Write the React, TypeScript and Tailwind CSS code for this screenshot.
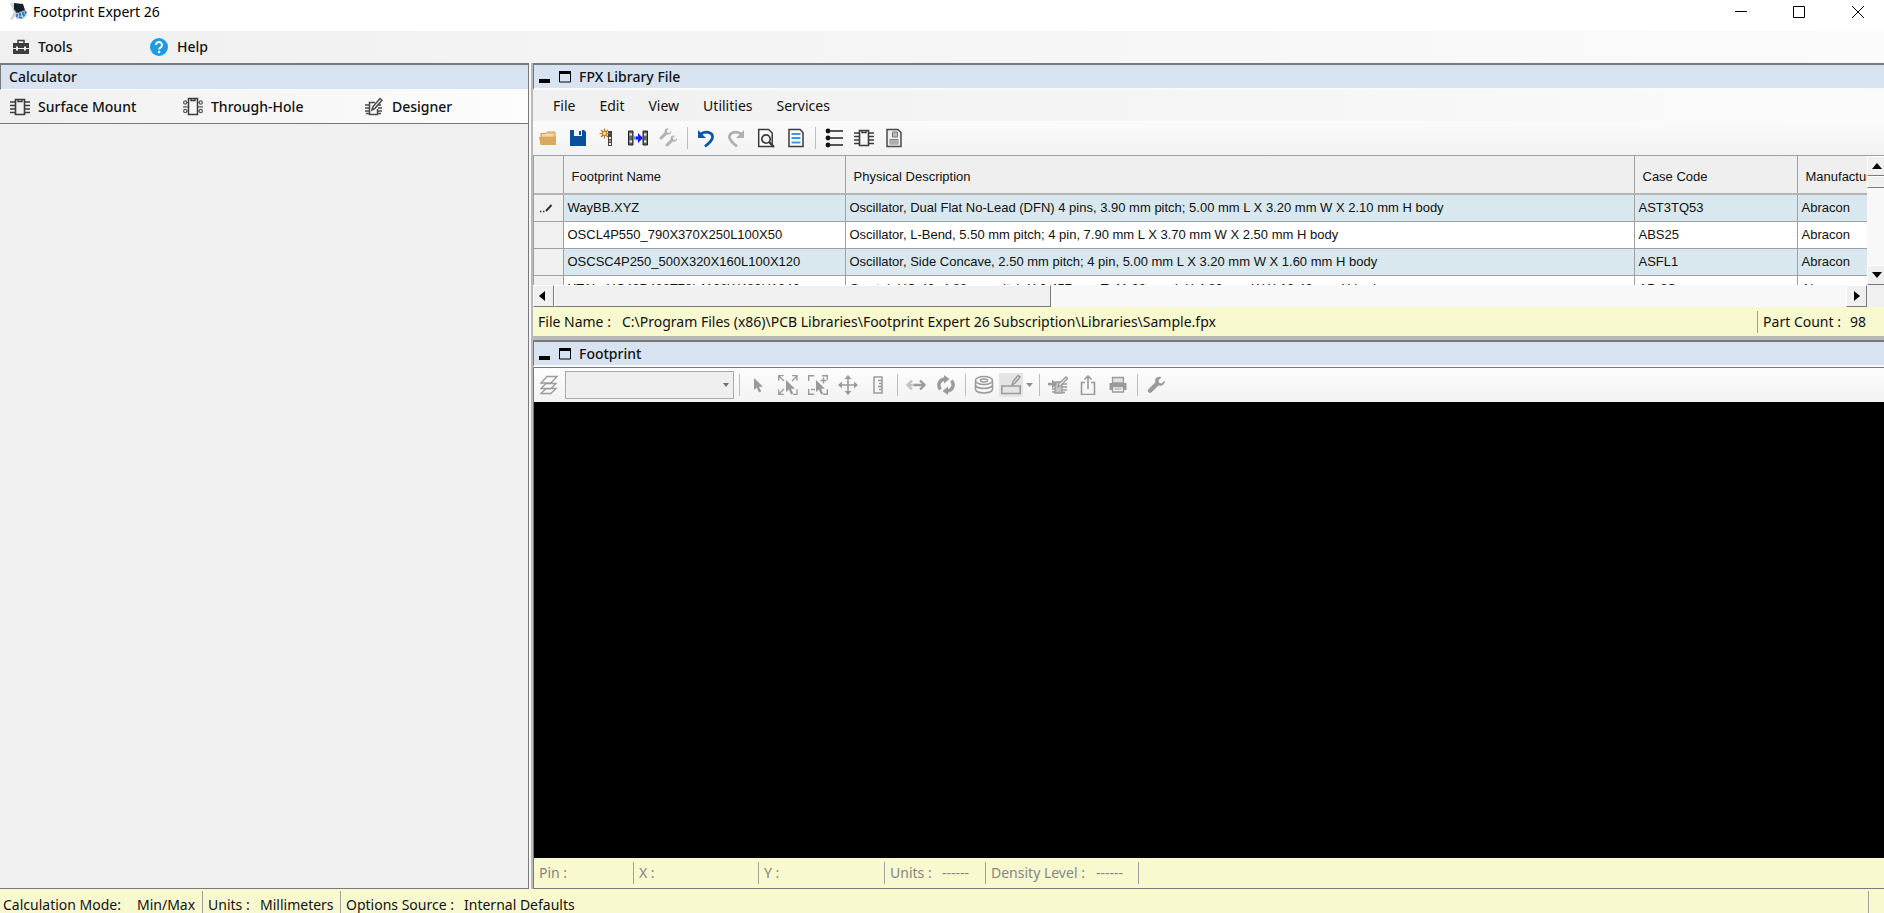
import React from "react";

type P = { children?: React.ReactNode };

const S = ({ w = 20, h = 20, children }: P & { w?: number; h?: number }) => (
  <svg width={w} height={h} viewBox={`0 0 ${w} ${h}`} fill="none" aria-hidden="true" className="shrink-0">
    {children}
  </svg>
);

const Logo = () => (
  <S w={20} h={20}>
    <path d="M1 1 L6 2 L8 11 L4 17 L1 18 L5 10 Z" fill="#cfd2d4" />
    <path d="M5 1 L14 2 L16 8 L8 11 L5 7 Z" fill="#16202a" />
    <path d="M7 11 L17 8 L18 13 L14 17 L8 17 L6 14 Z" fill="#b5cfe8" />
    <path d="M8 12v3M11 11v3M14 10v3M16.500 9v3M10 15l3 1M14 14l2-1" stroke="#2f74b8" strokeWidth="1.700" />
    <path d="M5 7l3 4 8-3" stroke="#4a5560" />
  </S>
);

const Toolbox = () => (
  <S w={18} h={16}>
    <path d="M6 4V1.500h6V4" stroke="#3d3d3d" strokeWidth="1.500" />
    <path d="M1 4h16v5h-3V7.500h-2V9H6V7.500H4V9H1zM1 10h3v1.500h2V10h6v1.500h2V10h3v5H1z" fill="#3d3d3d" />
  </S>
);

const HelpIcon = () => (
  <S w={18} h={18}>
    <circle cx="9" cy="9" r="9" fill="#1b9ce3" />
    <path d="M6 7a3 3 0 1 1 4.600 2.500C9.500 10.200 9.100 10.600 9.100 11.600" stroke="#fff" strokeWidth="2" />
    <circle cx="9.100" cy="14" r="1.300" fill="#fff" />
  </S>
);

const Chip = () => (
  <S>
    <path d="M5.500 2.500h9v15h-9z" stroke="#3b3b3b" strokeWidth="1.600" />
    <path d="M8 2.500v2h4v-2" stroke="#3b3b3b" strokeWidth="1.400" />
    <path d="M0 5h5M0 8.500h5M0 12h5M0 15.500h5M15 5h5M15 8.500h5M15 12h5M15 15.500h5" stroke="#3b3b3b" strokeWidth="1.600" />
  </S>
);

const ThroughChip = () => (
  <S>
    <path d="M5.500 1.500h9v16h-9z" stroke="#3b3b3b" strokeWidth="1.500" />
    <path d="M8 1.500v2h4v-2" stroke="#3b3b3b" strokeWidth="1.400" />
    <g stroke="#5a5a5a" strokeWidth="1.200">
      <circle cx="2.200" cy="5.500" r="1.600" />
      <circle cx="2.200" cy="14" r="1.600" />
      <circle cx="17.800" cy="5.500" r="1.600" />
      <circle cx="17.800" cy="14" r="1.600" />
      <path d="M0 9.800h5M15 9.800h5M4 5.500h1M4 14h1M15 5.500h1M15 14h1" />
    </g>
  </S>
);

const DesignerIcon = () => (
  <S w={18} h={20}>
    <path d="M10 5.500H4.500v12h8V12" stroke="#4a4a4a" strokeWidth="1.500" />
    <path d="M0 8h4M0 11h4M0 14h4M1 16.500h3M13 8h3M13 11h4M13 14h4M13 16.500h3" stroke="#4a4a4a" strokeWidth="1.300" />
    <path d="M7 13l1-3.500 7-8 2 1.800-7 8z" stroke="#4a4a4a" strokeWidth="1.500" fill="#f4f4f4" />
  </S>
);

const Folder = () => (
  <S>
    <path d="M3 9V5.500h5L9.500 4H17v5" fill="#e9c78f" stroke="#d79b47" />
    <path d="M1 9h15l2-1v9H2.500z" fill="#d9a960" />
    <path d="M4 7h11" stroke="#f7e6c8" />
  </S>
);

const Save = () => (
  <S>
    <path d="M2 2h14l2 2v14H2z" fill="#0a4f9e" />
    <path d="M6 2h8v6H6z" fill="#f4f8fc" />
    <path d="M11 3h2v4h-2z" fill="#0a4f9e" />
  </S>
);

const NewPart = () => (
  <S>
    <path d="M10 3h4v15h-4z" fill="#444" />
    <path d="M11 9h2v2h-2zM11 15h2v2h-2z" fill="#f4f4f4" />
    <path d="M11 12h2v2h-2z" fill="#999" />
    <path d="M6.500 .500v10M1.500 5.500h10M3 2l7 7M10 2l-7 7" stroke="#b8741a" strokeWidth="1.200" />
    <circle cx="6.500" cy="5.500" r="2" fill="#f8e2b4" stroke="#b8741a" />
  </S>
);

const Transfer = () => (
  <S>
    <path d="M.500 3h4.500v14H.500zM15 3h4.500v14H15z" fill="#666" stroke="#222" />
    <path d="M1.500 6.500h2.500M1.500 13.500h2.500M16 6.500h2.500M16 13.500h2.500" stroke="#eee" strokeWidth="1.800" />
    <path d="M5 8.500h4v3H5z" fill="#2aa3f0" />
    <path d="M8 8.500h2V5l5 5-5 5v-3.500H8z" fill="#1a1aee" />
  </S>
);

const WRENCH = "M18.500 4.800l-3 3-2.800-.600-.600-2.800 3-3C12.500.200 9.500 1.200 8.700 3.800c-.300 1-.200 1.900.100 2.800l-7.300 7.300c-.900.900-.900 2.400 0 3.300s2.400.900 3.300 0L12.100 10c2.600 1 5.600-.300 6.400-2.900.200-.800.200-1.600 0-2.300z";

const Wrenches = () => (
  <S>
    <g fill="#b3b3b3">
      <path d={WRENCH} transform="translate(1 0) scale(.65)" />
      <path d={WRENCH} transform="translate(7 7) scale(.65)" />
    </g>
  </S>
);

const Undo = () => (
  <S>
    <path d="M4 6.500C9 2.500 17 4 16.500 9.500 16 13 13 15 9 18.500" stroke="#0c55a8" strokeWidth="2.800" />
    <path d="M2 2v8h8z" fill="#0c55a8" />
  </S>
);

const Redo = () => (
  <S>
    <path d="M16 6.500C11 2.500 3 4 3.500 9.500 4 13 7 15 11 18.500" stroke="#b0b0b0" strokeWidth="2.800" />
    <path d="M18 2v8h-8z" fill="#b0b0b0" />
  </S>
);

const Preview = () => (
  <S>
    <path d="M2.700 1.500h10l3.500 3.500v13.500H2.700z" stroke="#3a3a3a" strokeWidth="1.500" fill="#fff" />
    <circle cx="10" cy="11" r="4.200" stroke="#3a3a3a" strokeWidth="1.700" fill="#f4f4f4" />
    <path d="M13 14l5 5" stroke="#3a3a3a" strokeWidth="2.400" />
  </S>
);

const DocLines = () => (
  <S>
    <path d="M3 1.500h11l3 3v14H3z" stroke="#3a3a3a" strokeWidth="1.500" fill="#fff" />
    <path d="M5.500 6h9M5.500 10h9M5.500 14.500h9" stroke="#3a98ee" strokeWidth="2" />
  </S>
);

const Bullets = () => (
  <S>
    <g fill="#111">
      <circle cx="4" cy="3" r="2.400" />
      <circle cx="4" cy="10" r="2.400" />
      <circle cx="4" cy="17" r="2.400" />
    </g>
    <path d="M5 3h14M5 10h14M5 17h14" stroke="#222" strokeWidth="1.400" />
  </S>
);

const DocPart = () => (
  <S>
    <path d="M3 1.500h11l3 3v14H3z" stroke="#4a4a4a" strokeWidth="1.500" fill="#eee" />
    <path d="M8.500 4h5v5h-5z" stroke="#777" fill="#bbb" />
    <path d="M5.500 11h9v5.500h-9z" fill="#8a8a8a" />
    <path d="M5.500 13h9M5.500 15h9" stroke="#d0d0d0" />
  </S>
);

const G = "#9a9a9a";

const Layers = () => (
  <S>
    <g stroke={G} strokeWidth="1.300" fill="#fafafa">
      <path d="M2 18.500h10l5-5H7z" />
      <path d="M2 13.500h10l5-5H7z" />
      <path d="M2 8h10l6-6.500H8z" />
    </g>
  </S>
);

const ARROW = "M0 0v12l2.800-2.500 2.200 5 2.200-1-2.200-4.800h4z";

const Cursor = () => (
  <S>
    <path d={ARROW} fill={G} transform="translate(6 3)" />
  </S>
);

const SelectAll = () => (
  <S>
    <path d="M.700 5.500V.700h5M1 1l5 5M14 .700h5v5M19 1l-5 5M.700 14.500v5h5M1 19l5-5M15 19.300h4v-5" stroke={G} strokeWidth="1.300" />
    <path d={ARROW} fill={G} transform="translate(8 5)" />
  </S>
);

const SelectMore = () => (
  <S>
    <path d="M.700 6V.700h5.500M14 .700h5.300v4M.700 14v5.300h5.500M15 19.300h4.300v-5M12.500 5.500h6M15.500 2.500v6M3 14.500h4" stroke={G} strokeWidth="1.400" />
    <path d={ARROW} fill={G} transform="translate(8 5)" />
  </S>
);

const Move = () => (
  <S>
    <path d="M10 2v16M2 10h16" stroke={G} strokeWidth="1.600" />
    <path d="M10 0l3.500 4h-7zM10 20l3.500-4h-7zM0 10l4-3.500v7zM20 10l-4-3.500v7z" fill={G} />
  </S>
);

const Ruler = () => (
  <S>
    <path d="M6 2h8v16H6zM14 5.500h-4M14 8.500h-3M14 11.500h-4M14 14.500h-3" stroke={G} strokeWidth="1.500" />
  </S>
);

const Swap = () => (
  <S>
    <path d="M10 10H2M6 5.500L1.500 10 6 14.500" stroke="#c2c2c2" strokeWidth="2.400" />
    <path d="M8 10h10M14 5.500l4.500 4.500-4.500 4.500" stroke={G} strokeWidth="2.400" />
  </S>
);

const Refresh = () => (
  <S>
    <path d="M4.500 14.500C1 10 3.500 4.500 9 4M15.500 5.500C19 10 16.500 15.500 11 16" stroke={G} strokeWidth="3.400" />
    <path d="M8 0l5.500 4L8 8.500zM12 20l-5.500-4L12 11.500z" fill={G} />
  </S>
);

const Discs = () => (
  <S>
    <g stroke={G} strokeWidth="1.500">
      <ellipse cx="10" cy="5.500" rx="8.500" ry="4" />
      <ellipse cx="10" cy="5.500" rx="3.500" ry="1.400" />
      <path d="M1.500 6v4c1 4.500 16 4.500 17 0V6M1.500 10.500v4c1 4.500 16 4.500 17 0v-4" />
    </g>
  </S>
);

const EditBox = () => (
  <S>
    <path d="M.800 11h18.400v7.500H.800z" stroke={G} strokeWidth="1.600" />
    <path d="M11 10l1-3.500 5-6 2 1.500-5 6z" stroke={G} strokeWidth="1.500" />
  </S>
);

const EditPart = () => (
  <S>
    <path d="M7 7h7v11H7z" fill="#c4c4c4" stroke={G} strokeWidth="1.300" />
    <path d="M4 14h3M4 17h3M14 9h5M14 12h5M14 15h5M14 17.500h3" stroke={G} strokeWidth="1.300" />
    <path d="M0 9h5" stroke={G} strokeWidth="2.600" />
    <path d="M4 4.500L9 9l-5 4.500z" fill={G} />
    <path d="M10 12l1-3.500 7-6.500 1.500 1.500-6.500 7z" fill="#eee" stroke={G} strokeWidth="1.300" />
  </S>
);

const Share = () => (
  <S>
    <path d="M7 7.500H3.500v12h13v-12H13M10 14V1.500M6.500 4.500L10 1l3.500 3.500" stroke={G} strokeWidth="1.600" />
  </S>
);

const Print = () => (
  <S>
    <path d="M4.500 2.500h11V8h-11z" stroke={G} strokeWidth="1.300" fill="#e2e2e2" />
    <path d="M1.500 8h17v7h-17z" fill={G} />
    <path d="M4.500 11.500h11v5.500h-11z" stroke={G} fill="#f2f2f2" strokeWidth="1.300" />
    <path d="M6.500 14h7" stroke={G} />
  </S>
);

const Wrench = () => (
  <S>
    <path d={WRENCH} fill={G} transform="translate(1 1) scale(.95)" />
  </S>
);

const Tool = ({ label, children }: P & { label: string }) => (
  <button type="button" aria-label={label} className="flex h-7 w-[30px] shrink-0 items-center justify-center">
    {children}
  </button>
);

const Sep = () => (
  <span className="flex w-2 shrink-0 justify-center">
    <span className="h-[22px] w-px bg-[#bdbdbd]" />
  </span>
);

const VBar = () => <span className="h-[22px] w-px shrink-0 bg-[#a0a0a0]" />;

const PaneTitle = ({ children }: P) => (
  <header className="flex h-[25px] shrink-0 items-center border-b-2 border-l border-b-[#fafafa] border-l-[#77797c] bg-[#d7e3f1] pl-[5px] font-medium">
    <button type="button" aria-label="Minimize pane" className="flex h-5 w-5 items-center">
      <S w={12} h={14}>
        <path d="M0 9h11v4H0z" fill="#000" />
      </S>
    </button>
    <button type="button" aria-label="Maximize pane" className="flex h-5 w-5 items-center">
      <S w={12} h={14}>
        <path d="M.500 2h11v10H.500z" stroke="#000" />
        <path d="M0 1h12v3H0z" fill="#000" />
      </S>
    </button>
    <h2>{children}</h2>
  </header>
);

const rows: string[][] = [
  ["WayBB.XYZ", "Oscillator, Dual Flat No-Lead (DFN) 4 pins, 3.90 mm pitch; 5.00 mm L X 3.20 mm W X 2.10 mm H body", "AST3TQ53", "Abracon"],
  ["OSCL4P550_790X370X250L100X50", "Oscillator, L-Bend, 5.50 mm pitch; 4 pin, 7.90 mm L X 3.70 mm W X 2.50 mm H body", "ABS25", "Abracon"],
  ["OSCSC4P250_500X320X160L100X120", "Oscillator, Side Concave, 2.50 mm pitch; 4 pin, 5.00 mm L X 3.20 mm W X 1.60 mm H body", "ASFL1", "Abracon"],
  ["XTAL_HC49P488T78L1138W480H1346", "Crystal, HC-49, 4.88 mm pitch X 0.457 mm T; 11.38 mm L X 4.80 mm W X 13.46 mm H body", "AB-3S", "Abracon"],
];

const raised = "border border-t-white border-l-white border-r-[#7a7a7a] border-b-[#7a7a7a] bg-[#f0f0f0] flex items-center justify-center shrink-0";

export default function App() {
  return (
    <div className="flex h-screen flex-col overflow-hidden bg-[#f0f0f0] font-['Noto_Sans',sans-serif] text-[14px] leading-5 text-[#111111]">
      <div className="flex h-[31px] shrink-0 bg-white">
        <div className="flex h-6 grow items-center gap-1 pl-[9px] text-black">
          <Logo />
          <h1>Footprint Expert 26</h1>
        </div>
        <div className="flex h-6 items-center">
          <button type="button" aria-label="Minimize" className="flex w-[58px] justify-center">
            <S w={12} h={12}><path d="M0 5.500h12" stroke="#000" /></S>
          </button>
          <button type="button" aria-label="Maximize" className="flex w-[58px] justify-center">
            <S w={12} h={12}><path d="M.500 .500h11v11H.500z" stroke="#000" /></S>
          </button>
          <button type="button" aria-label="Close" className="flex w-[56px] justify-center pl-1">
            <S w={12} h={12}><path d="M0 0l12 12M12 0L0 12" stroke="#000" /></S>
          </button>
        </div>
      </div>

      <nav className="flex h-8 shrink-0 items-center bg-linear-to-r from-[#f0f0f0] to-[#fbfbfb] pl-3 font-medium">
        <button type="button" className="flex w-[138px] items-center gap-2"><Toolbox />Tools</button>
        <button type="button" className="flex items-center gap-[9px]"><HelpIcon />Help</button>
      </nav>

      <div className="flex min-h-0 grow">
        <aside className="flex w-[529px] shrink-0 flex-col border-t-2 border-r border-b border-[#77797c]">
          <h2 className="h-[25px] border-b border-l border-b-[#fafafa] border-l-[#77797c] bg-[#d7e3f1] pl-2 leading-6 font-medium">Calculator</h2>
          <div className="flex h-[34px] items-center border-b border-[#77797c] bg-linear-to-r from-[#f0f0f0] to-[#fdfdfd] pl-[10px] font-medium">
            <button type="button" className="flex w-[173px] items-center gap-2"><Chip />Surface Mount</button>
            <button type="button" className="flex w-[182px] items-center gap-2"><ThroughChip />Through-Hole</button>
            <button type="button" className="flex items-center gap-[9px]"><DesignerIcon />Designer</button>
          </div>
        </aside>
        <div className="w-1 shrink-0 border-r-2 border-[#b9b9b9] bg-[#f8f8f8]" />

        <main className="flex min-w-0 grow flex-col border-b border-[#77797c]">
          <section className="flex shrink-0 flex-col border-t-2 border-[#77797c]">
            <PaneTitle>FPX Library File</PaneTitle>
            <nav className="flex h-[31px] items-center gap-6 bg-linear-to-r from-[#f0f0f0] to-[#fbfbfb] pl-5">
              {["File", "Edit", "View", "Utilities", "Services"].map((m) => (
                <button type="button" key={m}>{m}</button>
              ))}
            </nav>
            <div className="flex h-[35px] items-center border-b border-[#a0a0a0] bg-linear-to-b from-[#fbfbfb] to-[#f2f2f2]">
              <Tool label="Open"><Folder /></Tool>
              <Tool label="Save"><Save /></Tool>
              <Tool label="New part"><NewPart /></Tool>
              <Tool label="Transfer part"><Transfer /></Tool>
              <Tool label="Build"><Wrenches /></Tool>
              <Sep />
              <Tool label="Undo"><Undo /></Tool>
              <Tool label="Redo"><Redo /></Tool>
              <Tool label="Preview"><Preview /></Tool>
              <Tool label="Report"><DocLines /></Tool>
              <Sep />
              <Tool label="List"><Bullets /></Tool>
              <Tool label="Component"><Chip /></Tool>
              <Tool label="Data sheet"><DocPart /></Tool>
            </div>

            <div className="flex">
              <div className="min-w-0 grow">
                <div className="h-[129px] overflow-hidden border-l border-[#a0a0a0]">
                  <table className="w-full table-fixed border-collapse font-['Liberation_Sans',sans-serif] text-[13px] whitespace-nowrap">
                    <colgroup>
                      <col className="w-[29px]" />
                      <col className="w-[282px]" />
                      <col />
                      <col className="w-[163px]" />
                      <col className="w-[70px]" />
                    </colgroup>
                    <thead>
                      <tr className="h-[38px] border-b-2 border-[#b4b4b4] bg-[#efefef] text-left">
                        <th className="border-r border-[#a0a0a0]" aria-label="Row state" />
                        {["Footprint Name", "Physical Description", "Case Code"].map((h) => (
                          <th key={h} className="border-r border-[#a0a0a0] pt-1 pl-2 font-normal">{h}</th>
                        ))}
                        <th className="overflow-hidden pt-1 pl-2 font-normal">Manufacturer</th>
                      </tr>
                    </thead>
                    <tbody>
                      {rows.map((r, i) => (
                        <tr key={r[0]} className={`h-[27px] border-b border-[#a0a0a0] ${i % 2 ? "bg-white" : "bg-[#d8e8ee]"}`}>
                          <td className="border-r border-[#a0a0a0] bg-[#f0f0f0] pl-[6px]">
                            {i === 0 && (
                              <S w={14} h={12}>
                                <path d="M0 9.500h1.500M3 9.500h1.500" stroke="#333" strokeWidth="1.500" />
                                <path d="M6 9l5.500-6" stroke="#333" strokeWidth="2" />
                              </S>
                            )}
                          </td>
                          {r.map((c, j) => (
                            <td key={j} className={`overflow-hidden pl-1 ${j < 3 ? "border-r border-[#a0a0a0]" : ""}`}>{c}</td>
                          ))}
                        </tr>
                      ))}
                    </tbody>
                  </table>
                </div>
                <div className="flex h-[22px] bg-[#f8f8f8]">
                  <button type="button" aria-label="Scroll left" className={`w-[21px] pr-[3px] ${raised}`}>
                    <S w={6} h={10}><path d="M6 0v10L0 5z" fill="#000" /></S>
                  </button>
                  <div className="flex grow">
                    <div className={`w-5/13 ${raised}`} />
                  </div>
                  <button type="button" aria-label="Scroll right" className={`w-[21px] ${raised}`}>
                    <S w={6} h={10}><path d="M0 0v10l6-5z" fill="#000" /></S>
                  </button>
                </div>
              </div>
              <div className="flex w-[17px] shrink-0 flex-col overflow-hidden bg-[#f8f8f8]">
                <button type="button" aria-label="Scroll up" className={`h-5 w-[21px] pr-[2px] ${raised}`}>
                  <S w={10} h={6}><path d="M0 6h10L5 0z" fill="#000" /></S>
                </button>
                <div className={`h-3 w-[21px] ${raised}`} />
                <div className="grow" />
                <button type="button" aria-label="Scroll down" className={`h-5 w-[21px] pr-[2px] ${raised}`}>
                  <S w={10} h={6}><path d="M0 0h10L5 6z" fill="#000" /></S>
                </button>
                <div className="h-[22px] shrink-0 bg-[#f0f0f0]" />
              </div>
            </div>

            <div className="flex h-[29px] items-center bg-[#f9f9d0] pr-[18px] pl-[5px]">
              <span className="w-[84px]">File Name :</span>
              <span className="grow">C:\Program Files (x86)\PCB Libraries\Footprint Expert 26 Subscription\Libraries\Sample.fpx</span>
              <VBar />
              <span className="pl-[5px]">Part Count :</span>
              <span className="pl-[9px]">98</span>
            </div>
          </section>

          <section className="flex min-h-0 grow flex-col border-t-4 border-[#b9b9b9]">
            <div className="border-t-2 border-[#77797c]"><PaneTitle>Footprint</PaneTitle></div>
            <div className="flex h-[35px] shrink-0 items-center border-t border-l border-[#77797c] bg-linear-to-b from-[#fdfdfd] to-[#f2f2f2]">
              <Tool label="Layers"><Layers /></Tool>
              <div className="relative ml-px flex">
                <select aria-label="Layer" disabled className="h-7 w-[169px] appearance-none border border-[#a9a9a9] bg-[#efefef]" />
                <span className="pointer-events-none absolute top-3 right-[5px] border-x-[3px] border-t-4 border-x-transparent border-t-[#6e6e6e]" />
              </div>
              <span className="w-px" />
              <Sep />
              <Tool label="Select"><Cursor /></Tool>
              <Tool label="Select all"><SelectAll /></Tool>
              <Tool label="Add to selection"><SelectMore /></Tool>
              <Tool label="Move"><Move /></Tool>
              <Tool label="Measure"><Ruler /></Tool>
              <Sep />
              <Tool label="Flip"><Swap /></Tool>
              <Tool label="Rotate"><Refresh /></Tool>
              <Sep />
              <Tool label="Stack"><Discs /></Tool>
              <button type="button" aria-label="Draw" className="flex h-6 w-6 items-center justify-center bg-[#e4e4e4]"><EditBox /></button>
              <button type="button" aria-label="Draw options" className="flex w-3 justify-center">
                <S w={7} h={4}><path d="M0 0h7L3.500 4z" fill="#8f8f8f" /></S>
              </button>
              <Sep />
              <Tool label="Edit part"><EditPart /></Tool>
              <Tool label="Export"><Share /></Tool>
              <Tool label="Print"><Print /></Tool>
              <Sep />
              <Tool label="Settings"><Wrench /></Tool>
            </div>
            <div className="min-h-0 grow border-l border-[#77797c] bg-black" />
            <div className="flex h-[30px] shrink-0 items-center border-l border-[#77797c] bg-[#f9f9d0] text-[#858585]">
              <span className="w-[99px] pl-[5px]">Pin :</span>
              <VBar />
              <span className="w-[124px] pl-[5px]">X :</span>
              <VBar />
              <span className="w-[125px] pl-[5px]">Y :</span>
              <VBar />
              <span className="flex w-[100px] pl-[5px]"><span className="w-[52px]">Units :</span><span>------</span></span>
              <VBar />
              <span className="flex w-[152px] pl-[5px]"><span className="w-[105px]">Density Level :</span><span>------</span></span>
              <VBar />
            </div>
          </section>
        </main>
      </div>

      <footer className="flex h-[24px] shrink-0 items-end bg-[#f9f9d0] pl-[3px] leading-4">
        <span className="flex w-[199px]"><span className="w-[134px]">Calculation Mode:</span>Min/Max</span>
        <VBar />
        <span className="flex w-[137px] pl-[5px]"><span className="w-[52px]">Units :</span>Millimeters</span>
        <VBar />
        <span className="flex grow pl-[5px]"><span className="w-[118px]">Options Source :</span>Internal Defaults</span>
        <VBar />
        <span className="w-[15px]" />
      </footer>
    </div>
  );
}
